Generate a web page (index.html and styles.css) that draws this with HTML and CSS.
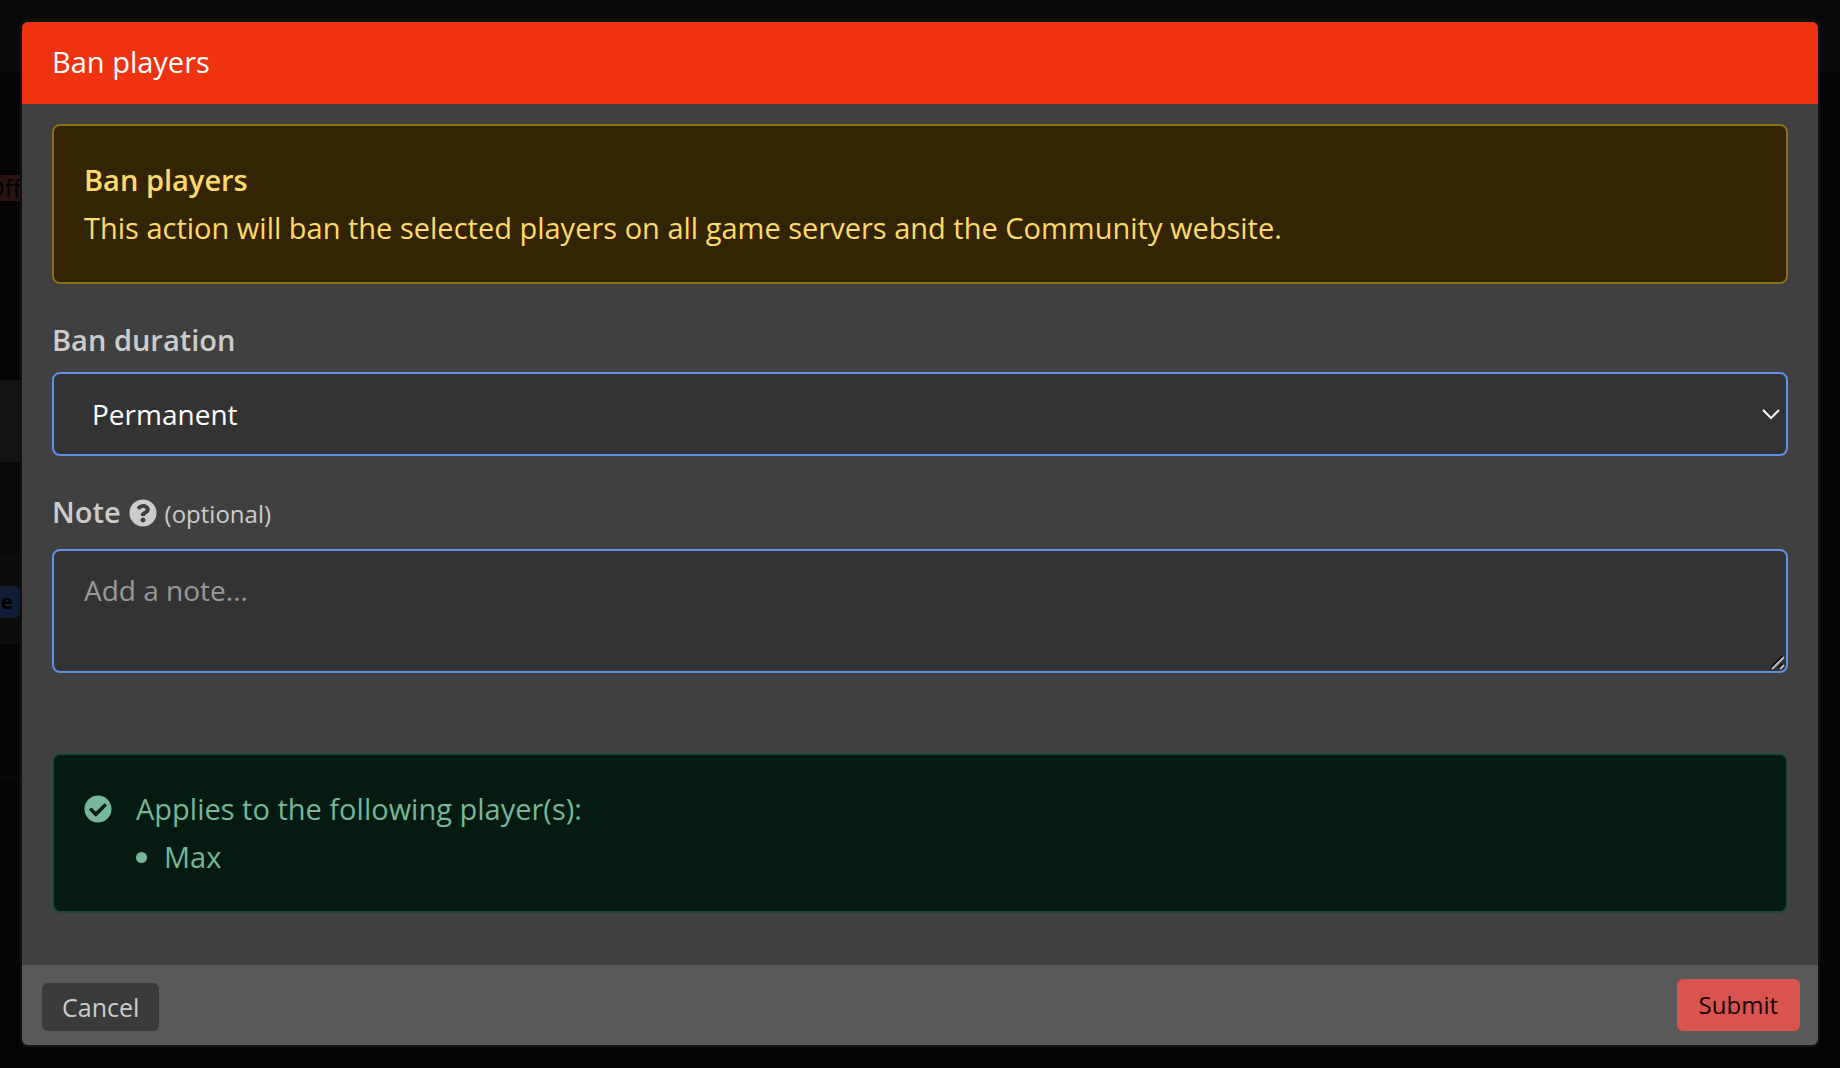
FILE: index.html
```html
<!DOCTYPE html>
<html lang="en">
<head>
<meta charset="utf-8">
<meta name="viewport" content="width=device-width, initial-scale=1">
<title>Ban players</title>
<link rel="stylesheet" href="styles.css">
</head>
<body>
<div class="page" aria-hidden="true">
  <div class="row row-head"></div>
  <div class="row row-status"><span class="tag tag-off">Off</span></div>
  <div class="row row-light"></div>
  <div class="row row-plain"></div>
  <div class="row row-badge"><span class="tag tag-blue">e</span></div>
  <div class="row row-foot"></div>
</div>
<main class="modal" role="dialog" aria-modal="true" aria-labelledby="modal-title">
  <header class="modal-header"><h1 class="modal-title" id="modal-title">Ban players</h1></header>
  <form class="modal-form">
    <div class="modal-body">
      <section class="alert alert-warning">
        <div>
          <h2 class="alert-title">Ban players</h2>
          <p class="alert-text">This action will ban the selected players on all game servers and the Community website.</p>
        </div>
      </section>
      <div class="field">
        <div class="field-head"><label class="label" for="duration">Ban duration</label></div>
        <div class="select-wrap">
          <select class="control select" id="duration"><option>Permanent</option></select>
          <svg class="chevron" viewBox="0 0 18 11" aria-hidden="true"><path d="M1 1l8 8 8-8" fill="none" stroke="currentColor" stroke-width="2"/></svg>
        </div>
      </div>
      <div class="field">
        <div class="field-head field-head-help">
          <label class="label" for="note">Note</label>
          <svg class="icon" viewBox="0 0 512 512" aria-hidden="true"><path fill="currentColor" d="M504 256c0 137-111 248-248 248S8 393 8 256C8 119.100 119 8 256 8s248 111.100 248 248zM262.700 90c-54.500 0-89.300 23-116.500 63.800-3.500 5.300-2.400 12.400 2.700 16.300l34.700 26.300c5.200 3.900 12.600 3 16.700-2.100 17.900-22.700 30.100-35.800 57.300-35.800 20.400 0 45.700 13.100 45.700 33 0 15-12.400 22.700-32.500 34C247.100 238.500 216 254.900 216 296v4c0 6.600 5.400 12 12 12h56c6.600 0 12-5.400 12-12v-1.300c0-28.500 83.200-29.600 83.200-106.700 0-58-60.200-102-116.500-102zM256 338c-25.400 0-46 20.600-46 46s20.600 46 46 46 46-20.600 46-46-20.600-46-46-46z"/></svg>
          <span class="hint">(optional)</span>
        </div>
        <textarea class="control note" id="note" rows="2" placeholder="Add a note..."></textarea>
      </div>
      <section class="alert alert-success">
        <svg class="icon alert-icon" viewBox="0 0 512 512" aria-hidden="true"><path fill="currentColor" d="M504 256c0 137-111 248-248 248S8 393 8 256 119 8 256 8s248 111 248 248zM227.300 387.300l184-184c6.200-6.200 6.200-16.400 0-22.600l-22.600-22.600c-6.200-6.200-16.400-6.200-22.600 0L216 308.100l-70.100-70.100c-6.200-6.200-16.400-6.200-22.600 0l-22.600 22.600c-6.200 6.200-6.200 16.400 0 22.600l104 104c6.200 6.300 16.400 6.300 22.600.1z"/></svg>
        <div>
          <p class="alert-text">Applies to the following player(s):</p>
          <ul class="players"><li class="player">Max</li></ul>
        </div>
      </section>
    </div>
    <footer class="modal-footer">
      <button class="btn btn-cancel" type="button">Cancel</button>
      <button class="btn btn-submit" type="submit">Submit</button>
    </footer>
  </form>
</main>
</body>
</html>
```
FILE: styles.css
```css
* { box-sizing: border-box; }

body {
  margin: 0;
  padding: 20px;
  min-height: 100vh;
  position: relative;
  background: #050505;
  color: #ccc;
  font-family: "Open Sans", "Noto Sans", sans-serif;
  font-size: 29px;
  line-height: 48px;
}

h1, h2, p, ul { margin: 0; padding: 0; }

/* Dimmed page behind the dialog */
.page {
  position: absolute;
  inset: 0;
  display: flex;
  flex-direction: column;
  overflow: hidden;
  color: #000;
}
.row { display: flex; align-items: center; width: 50%; }
.row-head { width: 100%; height: 72px; background: #090909; }
.row-status { height: 308px; padding-bottom: 76px; }
.row-light { height: 82px; background: #131313; }
.row-plain { height: 92px; background: #090909; }
.row-badge { height: 90px; padding-top: 6px; background: #0c0c0c; }
.row-foot { height: 134px; border-bottom: 2px solid #090909; }
.tag { font-size: 24px; line-height: 26px; }
.tag-off { margin-left: -14px; padding-right: 12px; background: #2a1110; }
.tag-blue {
  width: 20px;
  padding-left: 1px;
  border-radius: 0 6px 6px 0;
  background: #111c36;
  font-size: 20px;
  font-weight: 700;
  line-height: 32px;
}

/* Dialog */
.modal {
  position: relative;
  overflow: hidden;
  border: 2px solid #111;
  border-radius: 8px;
  background: #404040;
}
.modal-header { padding: 16px 30px 18px; background: #ef3311; color: #fff; }
.modal-title { font-size: 29px; font-weight: 400; line-height: 48px; }
.modal-body { padding: 20px 30px 52px; }

.alert {
  display: flex;
  gap: 24px;
  padding: 30px;
  border: 2px solid;
  border-radius: 8px;
}
.alert-warning { border-color: #8f6d12; background: #332504; color: #ffda6a; }
.alert-success {
  margin-top: 80px;
  border-color: #1b4936;
  background: #051b11;
  color: #75b798;
}
.alert-title { font-size: 29px; font-weight: 600; line-height: 48px; }

.field { margin-top: 32px; }
.field-head { display: flex; align-items: baseline; gap: 8px; margin-bottom: 8px; }
.field-head-help { margin-bottom: 11px; }
.label { font-weight: 600; }
.hint { font-size: 24px; }
.icon { flex: none; align-self: center; width: 28px; height: 28px; }
.alert-icon { align-self: flex-start; margin-top: 10px; }

.control {
  display: block;
  width: 100%;
  border: 2px solid #5c91e8;
  border-radius: 8px;
  outline: 0;
  background: #333;
  color: #fff;
  font: inherit;
  font-size: 28px;
}
.select-wrap { display: grid; align-items: center; }
.select-wrap > * { grid-area: 1 / 1; }
.select { padding: 16px 38px; line-height: 48px; appearance: none; }
.chevron {
  justify-self: end;
  width: 18px;
  height: 11px;
  margin-right: 8px;
  color: #fff;
  pointer-events: none;
}
.note { padding: 18px 30px; line-height: 42px; resize: vertical; }
.note::placeholder { color: #999; opacity: 1; }
.note::-webkit-resizer {
  background: url("data:image/svg+xml,%3Csvg xmlns='http://www.w3.org/2000/svg' viewBox='0 0 15 15'%3E%3Cpath d='M0 12L12 0M8 12L12 8' stroke='%23000' stroke-width='2'/%3E%3Cpath d='M1 13L13 1M9 13L13 9' stroke='%23bbb' stroke-width='2'/%3E%3C/svg%3E") center / 15px 15px no-repeat;
}

.players { list-style: none; }
.player { display: flex; align-items: center; gap: 17px; }
.player::before {
  content: "";
  width: 11px;
  height: 11px;
  border-radius: 50%;
  background: currentColor;
}

.modal-footer {
  display: flex;
  align-items: flex-end;
  justify-content: space-between;
  padding: 14px 18px 14px 20px;
  background: #595959;
}
.btn {
  border: 0;
  border-radius: 6px;
  font: inherit;
}
.btn-cancel {
  padding: 0 20px;
  background: #3a3a3a;
  color: #ccc;
  font-size: 25px;
  line-height: 48px;
}
.btn-submit {
  padding: 0 22px;
  background: #d9534f;
  color: #150505;
  font-size: 24px;
  line-height: 52px;
}
```
